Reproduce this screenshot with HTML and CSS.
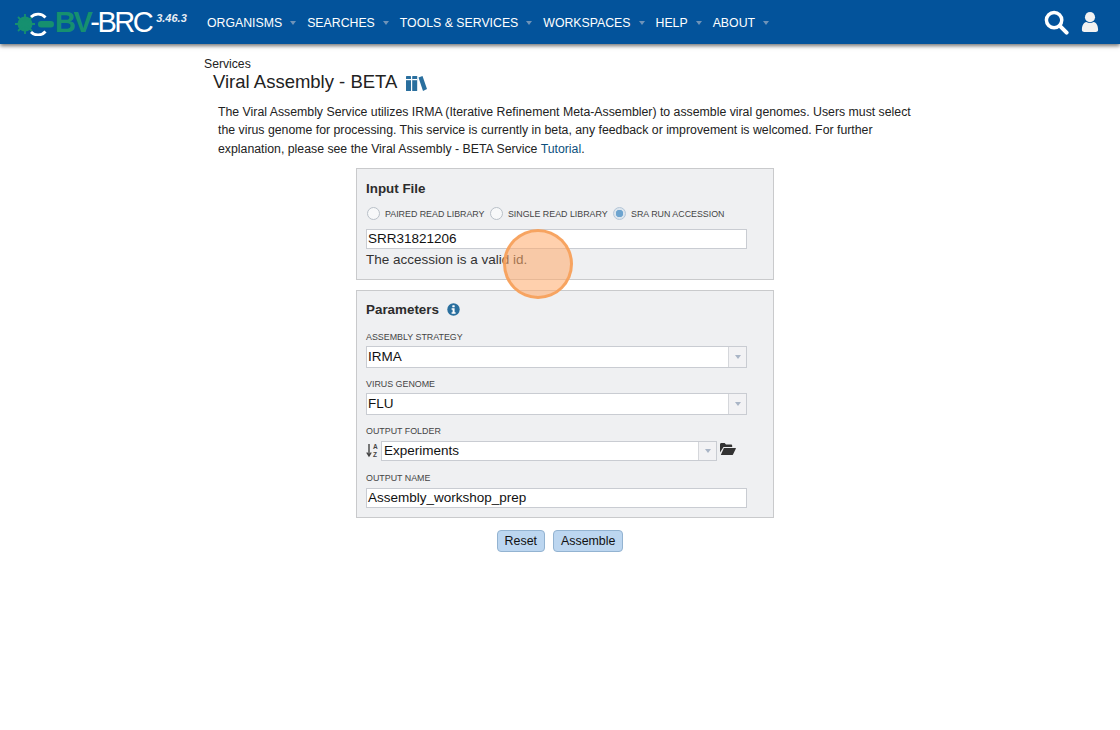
FILE: index.html
```html
<!DOCTYPE html>
<html lang="en">
<head>
<meta charset="utf-8">
<title>Viral Assembly - BETA</title>
<link rel="stylesheet" href="styles.css">
</head>
<body>
<header class="topbar">
  <div class="brand">
    <svg class="logo-mark" width="39" height="28" viewBox="0 0 39 28">
      <g fill="#16906f">
        <circle cx="10" cy="16" r="7.500"/>
        <path d="M10 6v20M0 16h20M3 9l14 14M17 9L3 23" stroke="#16906f" stroke-width="1.800"/>
      </g>
      <path d="M30.500 9.500A9.800 9.800 0 0 0 16 9M16 24a9.800 9.800 0 0 0 14.500-.5" fill="none" stroke="#fff" stroke-width="2.800"/>
      <rect x="23" y="13" width="16" height="6.500" rx="3.200" fill="#16906f"/>
    </svg>
    <span class="logo-text"><span class="logo-green">BV</span>-BRC</span>
    <span class="version">3.46.3</span>
  </div>
  <nav class="nav">
    <a class="nav-item">ORGANISMS<i class="caret"></i></a>
    <a class="nav-item">SEARCHES<i class="caret"></i></a>
    <a class="nav-item">TOOLS &amp; SERVICES<i class="caret"></i></a>
    <a class="nav-item">WORKSPACES<i class="caret"></i></a>
    <a class="nav-item">HELP<i class="caret"></i></a>
    <a class="nav-item">ABOUT<i class="caret"></i></a>
  </nav>
  <div class="top-icons">
    <svg width="25" height="25" viewBox="0 0 26 26"><circle cx="10.500" cy="10.500" r="8" fill="none" stroke="#fff" stroke-width="3.600"/><path d="M16.500 16.500l7 7" stroke="#fff" stroke-width="4.200" stroke-linecap="round"/></svg>
    <svg width="18" height="22" viewBox="0 0 20 24"><circle cx="10" cy="6.600" r="5.600" fill="#f2f2f2"/><path d="M1 20.500c0-5 2-8 5-8.600 2.400 1.500 5.600 1.500 8 0 3 .6 5 3.600 5 8.600 0 1.700-1.200 2.500-2.600 2.500H3.600C2.200 23 1 22.200 1 20.500z" fill="#f2f2f2"/></svg>
  </div>
</header>

<main class="page">
  <div class="crumb">Services</div>
  <h1 class="title">Viral Assembly - BETA
    <svg class="books" width="21" height="15" viewBox="0 0 21 15"><g fill="#2a6f9e"><rect x="0" y="0" width="5" height="15" rx=".6"/><rect x="6.200" y="0" width="5" height="15" rx=".6"/><path d="M12.500 1.500l4-1.500 4.500 13-4 2z"/></g><g fill="#fff"><rect x="0" y="3" width="5" height="1.200"/><rect x="6.200" y="3" width="5" height="1.200"/></g></svg>
  </h1>
  <p class="intro">The Viral Assembly Service utilizes IRMA (Iterative Refinement Meta-Assembler) to assemble viral genomes. Users must select the virus genome for processing. This service is currently in beta, any feedback or improvement is welcomed. For further explanation, please see the Viral Assembly - BETA Service <a class="link">Tutorial</a>.</p>

  <form class="form">
    <section class="panel panel-input">
      <h2 class="panel-title">Input File</h2>
      <div class="radios">
        <span class="radio"><i class="dot"></i>PAIRED READ LIBRARY</span>
        <span class="radio"><i class="dot"></i>SINGLE READ LIBRARY</span>
        <span class="radio"><i class="dot dot-on"></i>SRA RUN ACCESSION</span>
      </div>
      <div class="field field-accession">SRR31821206</div>
      <div class="valid">The accession is a valid id.</div>
    </section>

    <section class="panel panel-params">
      <h2 class="panel-title">Parameters
        <svg class="info" width="13" height="13" viewBox="0 0 13 13"><circle cx="6.500" cy="6.500" r="6.200" fill="#2a6f9e"/><rect x="5.300" y="2.200" width="2.400" height="2" rx=".5" fill="#fff"/><path d="M4.600 5.300h3v4h1v1.500H4.600V9.300h1V6.800h-1z" fill="#fff"/></svg>
      </h2>
      <label class="lab lab-first">ASSEMBLY STRATEGY</label>
      <div class="field select"><span>IRMA</span><b class="arrow"><i></i></b></div>
      <label class="lab">VIRUS GENOME</label>
      <div class="field select"><span>FLU</span><b class="arrow"><i></i></b></div>
      <label class="lab">OUTPUT FOLDER</label>
      <div class="folder-row">
        <svg class="sort" width="13" height="15" viewBox="0 0 13 15"><path d="M3 1v11M.8 9.500L3 13l2.200-3.500" fill="none" stroke="#444" stroke-width="1.400"/><text x="7" y="6" class="sort-t">A</text><text x="7" y="14" class="sort-t">Z</text></svg>
        <div class="field select folder"><span>Experiments</span><b class="arrow"><i></i></b></div>
        <svg class="open" width="16" height="12" viewBox="0 0 16 12"><path d="M0 1.500C0 .7.600 0 1.400 0h3.200l1.400 1.600h5c.7 0 1.200.5 1.200 1.200V4H3.500L0 9.500z" fill="#333"/><path d="M3.900 5H15.400c.4 0 .6.400.4.800L13 11.400c-.2.400-.5.600-.9.600H.8z" fill="#333"/></svg>
      </div>
      <label class="lab lab-name">OUTPUT NAME</label>
      <div class="field field-name">Assembly_workshop_prep</div>
    </section>

    <div class="actions">
      <button type="button" class="btn">Reset</button>
      <button type="button" class="btn">Assemble</button>
    </div>
  </form>
</main>

<div class="click-ring"></div>
</body>
</html>
```
FILE: styles.css
```css
* { box-sizing: border-box; }
html, body { margin: 0; padding: 0; }
body {
  background: #fff;
  color: #222;
  font-family: "Liberation Sans", Arial, sans-serif;
  height: 730px;
  overflow: hidden;
  position: relative;
}
.topbar {
  height: 44px;
  background: #03539b;
  box-shadow: 0 2px 4px rgba(0,0,0,.55);
  display: flex;
  align-items: center;
  padding-left: 15px;
  color: #fff;
}
.brand { display: flex; align-items: center; width: 192px; height: 44px; white-space: nowrap; }
.logo-mark { flex: none; margin-right: 1px; }
.logo-text {
  font-size: 29px;
  letter-spacing: -2.500px;
  font-weight: 400;
  color: #fff;
  line-height: 44px;
}
.logo-green { color: #16906f; font-weight: 700; }
.version {
  font-size: 11px;
  font-style: italic;
  font-weight: 700;
  color: #e8eef5;
  margin: -8px 0 0 5px;
}
.nav { display: flex; align-items: center; padding-top: 2px; }
.nav-item {
  font-size: 12.300px;
  font-weight: 400;
  color: #fff;
  display: flex;
  align-items: center;
  margin-right: 11px;
  white-space: nowrap;
}
.caret {
  width: 0; height: 0;
  margin-left: 8px;
  border: 3.500px solid transparent;
  border-top: 4px solid #6f93b8;
  border-bottom: 0;
}
.top-icons {
  margin-left: auto;
  display: flex;
  align-items: center;
  gap: 12px;
  padding-right: 21px;
}
.page { padding-left: 204px; }
.crumb { font-size: 12.200px; line-height: 15px; margin-top: 13px; }
.title {
  font-size: 18.500px;
  font-weight: 400;
  line-height: 24px;
  margin: -2px 0 0 9px;
  color: #222;
  display: flex;
  align-items: center;
  gap: 9px;
}
.books { margin-top: 2px; }
.intro {
  width: 706px;
  margin: 9px 0 0 14px;
  font-size: 12.300px;
  line-height: 18.300px;
  color: #222;
}
.link { color: #0b4f7d; }
.form { width: 418px; margin: 10px 0 0 152px; }
.panel {
  background: #eff0f2;
  border: 1px solid #c9cacc;
  padding: 0 26px 0 9px;
}
.panel-input { height: 112px; }
.panel-params { height: 228px; margin-top: 10px; }
.panel-title {
  font-size: 13.400px;
  font-weight: 700;
  margin: 0;
  color: #2c2c2c;
  line-height: 16px;
  padding-top: 12px;
  display: flex;
  align-items: center;
  gap: 8px;
}
.panel-params .panel-title { padding-top: 11px; }
.radios { display: flex; margin-top: 10px; height: 14px; align-items: center; white-space: nowrap; }
.radio {
  display: flex;
  align-items: center;
  font-size: 8.850px;
  color: #444;
  margin-right: 4.500px;
}
.dot {
  flex: none;
  width: 13px; height: 13px;
  border-radius: 50%;
  border: 1px solid #b9c0c8;
  background: #f7f8f9;
  margin: 0 5px 0 1px;
  display: block;
}
.dot-on {
  border: 1.500px solid #b4c6d8;
  background: radial-gradient(circle, #6da4cf 0 3.500px, #dbe5ee 4px);
}
.field {
  background: #fff;
  border: 1px solid #c9ccd2;
  font-size: 13.500px;
  color: #111;
  padding-left: 1px;
  display: flex;
  align-items: center;
  width: 381px;
}
.field-accession { height: 20px; margin-top: 8px; }
.valid { font-size: 13.500px; line-height: 20px; color: #333; padding-top: 1px; }
.lab {
  display: block;
  font-size: 8.900px;
  color: #444;
  line-height: 12px;
  margin: 10px 0 3px;
}
.lab-first { margin-top: 13px; }
.lab-name { margin-top: 11px; }
.select { height: 22px; justify-content: space-between; padding-right: 0; }
.arrow {
  width: 18px;
  height: 100%;
  background: #f2f2f4;
  border-left: 1px solid #d5d7db;
  display: flex;
  align-items: center;
  justify-content: center;
}
.arrow i {
  width: 0; height: 0;
  border: 3.500px solid transparent;
  border-top: 4px solid #a9b5c6;
  border-bottom: 0;
}
.folder-row { display: flex; align-items: center; height: 20px; margin-top: 4px; }
.sort { flex: none; width: 13px; margin-right: 2px; }
.sort-t { font: 700 6.500px "Liberation Sans", sans-serif; fill: #444; }
.folder { width: 336px; height: 20px; padding-left: 2px; }
.open { margin: -3px 0 0 3px; }
.field-name { height: 20px; margin-top: 4px; }
.actions { display: flex; justify-content: center; gap: 8px; margin-top: 12px; padding-right: 10px; }
.btn {
  font: 12.400px "Liberation Sans", Arial, sans-serif;
  height: 22px;
  padding: 0 7px;
  color: #111;
  background: #bcd6f0;
  border: 1px solid #93b3d1;
  border-radius: 4px;
}
.click-ring {
  position: absolute;
  left: 503px;
  top: 229px;
  width: 70px;
  height: 70px;
  border-radius: 50%;
  background: rgba(255, 170, 105, .55);
  border: 3px solid rgba(246, 160, 90, .9);
}
```
